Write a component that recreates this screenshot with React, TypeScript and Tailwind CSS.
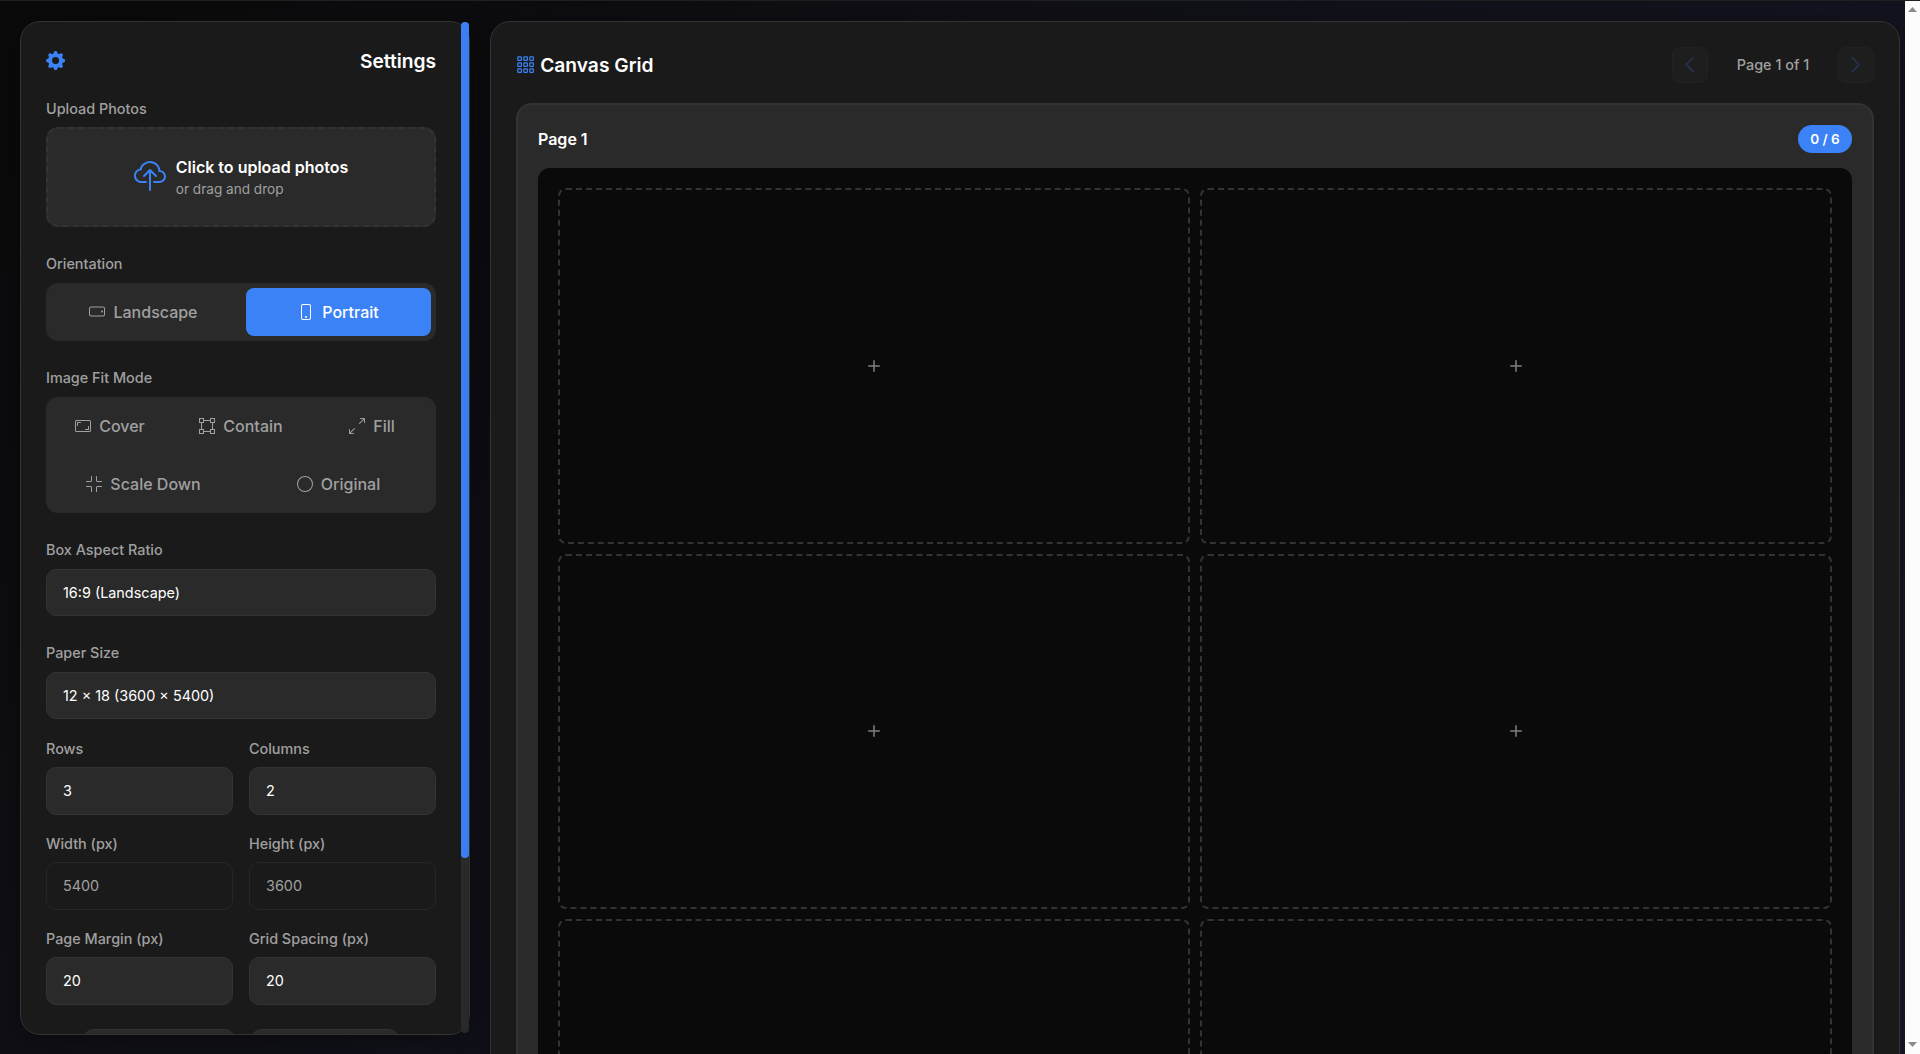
import type { ReactNode } from "react";
import clsx from "clsx";
import {
  BsArrowsAngleExpand,
  BsAspectRatio,
  BsBoundingBox,
  BsChevronLeft,
  BsChevronRight,
  BsCircle,
  BsCloudUpload,
  BsFullscreenExit,
  BsGearFill,
  BsGrid3X3Gap,
  BsPhone,
  BsPhoneLandscape,
  BsPlus,
} from "react-icons/bs";

const Label = ({ children }: { children: ReactNode }) => (
  <div className="text-[14.4px] leading-[21.6px] font-medium text-[#a0a0a0] mb-2">
    {children}
  </div>
);

const Field = ({
  label,
  value,
  disabled,
}: {
  label: string;
  value: string;
  disabled?: boolean;
}) => (
  <div>
    <Label>{label}</Label>
    <div
      className={clsx(
        "h-[47.6px] rounded-[10px] border px-4 flex items-center text-[14.4px]",
        disabled
          ? "bg-[#1a1a1a] border-[#272727] text-[#a0a0a0]"
          : "bg-[#2a2a2a] border-[#333333] text-white"
      )}
    >
      {value}
    </div>
  </div>
);

const ModeButton = ({
  icon,
  label,
  active,
  className,
}: {
  icon: ReactNode;
  label: string;
  active?: boolean;
  className?: string;
}) => (
  <button
    className={clsx(
      "h-12 rounded-lg flex items-center justify-center gap-2 text-base font-medium",
      active ? "bg-[#3b82f6] text-white" : "text-[#a0a0a0]",
      className
    )}
  >
    {icon}
    <span>{label}</span>
  </button>
);

const SettingsPanel = () => {
  return (
    <aside className="w-[450px] h-[1014px] shrink-0 flex bg-[#1a1a1a] border border-[#333333] rounded-[20px] shadow-[0_8px_32px_rgba(0,0,0,0.4)]">
      <div className="flex-1 h-[1012px] overflow-hidden rounded-l-[19px] px-[25px] pt-[25px]">
        <div className="flex items-start justify-between h-7 mb-[22.7px]">
          <BsGearFill className="size-[19.2px] mt-1 text-[#3b82f6]" />
          <h2 className="text-[19.2px] leading-7 font-semibold text-white">Settings</h2>
        </div>

        <div className="mb-[26.1px]">
          <Label>Upload Photos</Label>
          <div className="h-[100px] rounded-xl border-2 border-dashed border-[#333333] bg-[#2a2a2a] flex items-center justify-center gap-[10px]">
            <BsCloudUpload className="size-8 text-[#3b82f6]" />
            <div>
              <div className="text-base leading-6 font-semibold text-white">
                Click to upload photos
              </div>
              <div className="text-[13.6px] leading-5 text-[#a0a0a0]">
                or drag and drop
              </div>
            </div>
          </div>
        </div>

        <div className="mb-[26.4px]">
          <Label>Orientation</Label>
          <div className="rounded-xl bg-[#2a2a2a] p-[5px] grid grid-cols-2 gap-[10px]">
            <ModeButton icon={<BsPhoneLandscape />} label="Landscape" />
            <ModeButton icon={<BsPhone />} label="Portrait" active />
          </div>
        </div>

        <div className="mb-[26.2px]">
          <Label>Image Fit Mode</Label>
          <div className="rounded-xl bg-[#2a2a2a] p-[5px] flex flex-wrap gap-[10px]">
            <ModeButton icon={<BsAspectRatio />} label="Cover" className="w-[118px]" />
            <ModeButton icon={<BsBoundingBox />} label="Contain" className="w-[124px]" />
            <ModeButton icon={<BsArrowsAngleExpand />} label="Fill" className="w-[118px]" />
            <ModeButton icon={<BsFullscreenExit />} label="Scale Down" className="w-[185px]" />
            <ModeButton icon={<BsCircle />} label="Original" className="w-[185px]" />
          </div>
        </div>

        <div className="mb-[25.8px]">
          <Field label="Box Aspect Ratio" value="16:9 (Landscape)" />
        </div>
        <div className="mb-[18.2px]">
          <Field label="Paper Size" value="12 × 18 (3600 × 5400)" />
        </div>
        <div className="grid grid-cols-2 gap-x-4 gap-y-[18px]">
          <Field label="Rows" value="3" />
          <Field label="Columns" value="2" />
          <Field label="Width (px)" value="5400" disabled />
          <Field label="Height (px)" value="3600" disabled />
          <Field label="Page Margin (px)" value="20" />
          <Field label="Grid Spacing (px)" value="20" />
        </div>
        <div className="flex justify-center gap-[14px] mt-6">
          <div className="w-[154px] h-12 rounded-xl border border-[#333333] bg-[#2a2a2a]" />
          <div className="w-[150px] h-12 rounded-xl border border-[#333333] bg-[#2a2a2a]" />
        </div>
      </div>
      <div className="w-2 h-[1011px] rounded bg-[#2a2a2a]">
        <div className="h-[836px] rounded bg-[#3b82f6]" />
      </div>
    </aside>
  );
};

const CanvasPanel = () => {
  return (
    <main className="w-[1410px] h-[1200px] shrink-0 bg-[#1a1a1a] border border-[#333333] rounded-[20px] p-[25px] shadow-[0_8px_32px_rgba(0,0,0,0.4)]">
      <div className="flex items-center justify-between h-9 mb-5">
        <h2 className="flex items-center gap-[5px] text-[19.2px] font-semibold text-white">
          <BsGrid3X3Gap className="text-[#3b82f6]" />
          Canvas Grid
        </h2>
        <div className="flex items-center">
          <button className="size-9 rounded-lg border border-[#333333] bg-[#2a2a2a] text-[#3b82f6] opacity-30 flex items-center justify-center">
            <BsChevronLeft className="size-[19.2px] shrink-0" />
          </button>
          <span className="w-[130px] text-center text-[14.4px] font-medium text-[#a0a0a0]">
            Page 1 of 1
          </span>
          <button className="size-9 rounded-lg border border-[#333333] bg-[#2a2a2a] text-[#3b82f6] opacity-30 flex items-center justify-center">
            <BsChevronRight className="size-[19.2px] shrink-0" />
          </button>
        </div>
      </div>

      <section className="rounded-2xl border-2 border-[#333333] bg-[#2a2a2a] p-5">
        <div className="flex items-center justify-between h-7 mb-[15px]">
          <h3 className="text-base font-semibold text-white">Page 1</h3>
          <span className="w-[54px] h-7 rounded-[20px] bg-[#3b82f6] flex items-center justify-center text-[13.6px] font-semibold text-white">
            0 / 6
          </span>
        </div>
        <div className="rounded-xl bg-[#0a0a0a] p-5 grid grid-cols-2 gap-[10px]">
          {[0, 1, 2, 3, 4, 5].map((box) => (
            <div
              key={box}
              className="aspect-video rounded-lg border-2 border-dashed border-[#333333] flex items-center justify-center text-[#808080]"
            >
              <BsPlus className="size-6" />
            </div>
          ))}
        </div>
      </section>
    </main>
  );
};

const PageScrollbar = () => (
  <div className="w-[15px] h-full shrink-0 bg-[#fcfcfc] flex flex-col items-center justify-between pt-[6px] pb-[7px]">
    <svg width="9" height="5" viewBox="0 0 9 5" fill="#8b8b8b">
      <path d="M4.5 0L9 5H0z" />
    </svg>
    <svg width="9" height="5" viewBox="0 0 9 5" fill="#8b8b8b">
      <path d="M4.5 5L0 0h9z" />
    </svg>
  </div>
);

const App = () => {
  return (
    <div className="h-[1054px] overflow-hidden flex border-t border-[#1f1f1f] font-[Inter,sans-serif] bg-[#0a0a0a]">
      <div className="flex-1 overflow-hidden">
        <div className="h-[1240px] p-5 pr-[5px] flex gap-5 bg-[linear-gradient(135deg,#0a0a0a_0%,#1a1a2e_100%)]">
          <SettingsPanel />
          <CanvasPanel />
        </div>
      </div>
      <PageScrollbar />
    </div>
  );
};

export default App;
